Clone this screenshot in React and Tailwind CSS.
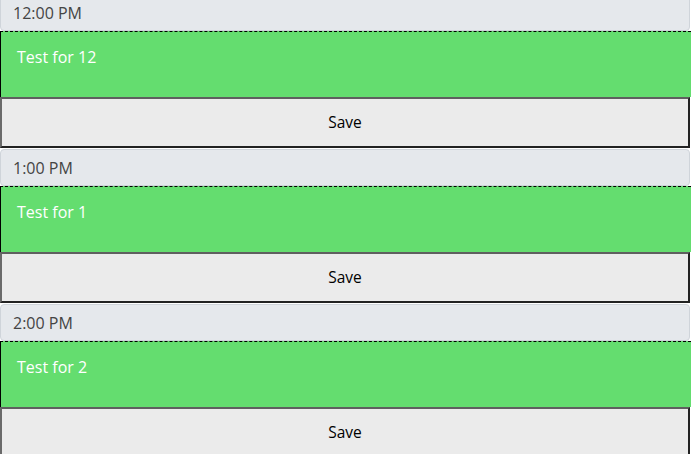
const hours = [
  { label: '12:00 PM', text: 'Test for 12' },
  { label: '1:00 PM', text: 'Test for 1' },
  { label: '2:00 PM', text: 'Test for 2' },
];

function HourBlock({ label, text }) {
  return (
    <div className="flex flex-col mb-px">
      <div className="h-[37px] flex items-center pl-3 bg-[#e5e8ec] border border-[#cfd4da] rounded-[4px] mr-px text-[16px] text-[#444]">
        {label}
      </div>
      <div className="h-[66px] bg-[#64dd6f] border-t border-l border-solid [border-top-style:dashed] border-t-black border-l-black pl-4 pt-[13px] text-[16px] text-white">
        {text}
      </div>
      <button className="h-[51px] bg-[#ebebeb] border-2 border-t-[#5f5f5f] border-l-[#6a6a6a] border-b-[#222] border-r-[#222] mr-px text-[15.5px] text-black">
        Save
      </button>
    </div>
  );
}

export default function App() {
  return (
    <div className="h-[454px] overflow-hidden bg-white font-['Open_Sans',sans-serif]">
      <div className="-mt-[6px]">
        {hours.map(h => (
          <HourBlock key={h.label} label={h.label} text={h.text} />
        ))}
      </div>
    </div>
  );
}
